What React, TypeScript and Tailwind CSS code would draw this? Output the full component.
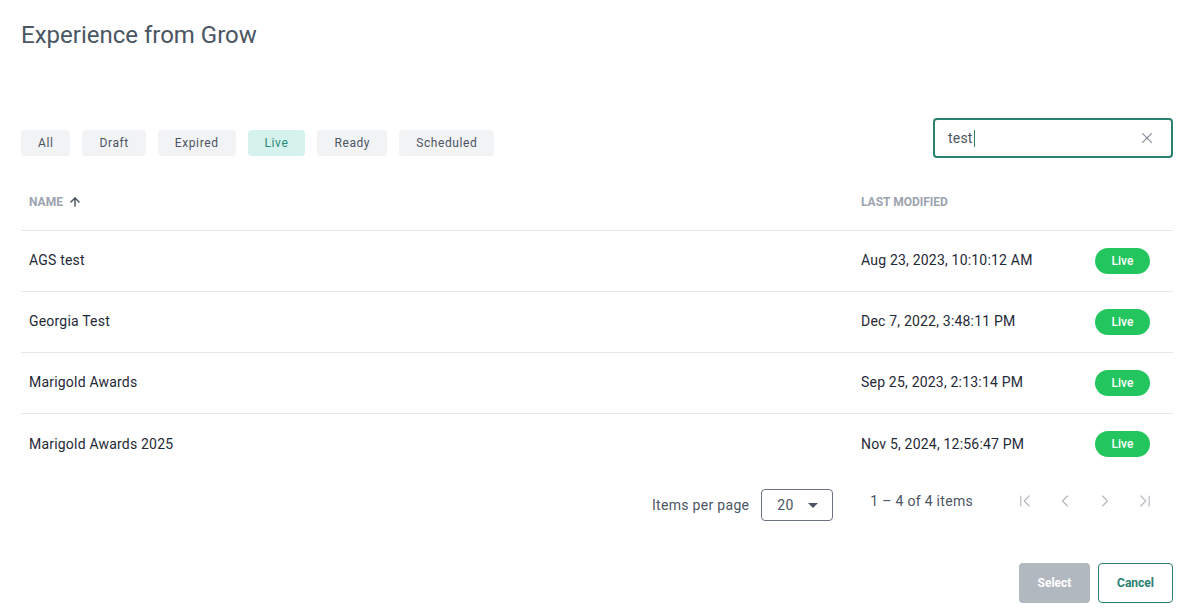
import { ArrowUp, X, ChevronLeft, ChevronRight, ChevronFirst, ChevronLast } from 'lucide-react'

type Fila = {
  nombre: string
  fecha: string
}

const FILTROS = ['All', 'Draft', 'Expired', 'Live', 'Ready', 'Scheduled']

const FILAS: Fila[] = [
  { nombre: 'AGS test', fecha: 'Aug 23, 2023, 10:10:12 AM' },
  { nombre: 'Georgia Test', fecha: 'Dec 7, 2022, 3:48:11 PM' },
  { nombre: 'Marigold Awards', fecha: 'Sep 25, 2023, 2:13:14 PM' },
  { nombre: 'Marigold Awards 2025', fecha: 'Nov 5, 2024, 12:56:47 PM' },
]

function App() {
  return (
    <div
      className="min-h-screen bg-white px-[21px] pt-[19px] text-[#1f2937]"
      style={{ fontFamily: 'Roboto, "Liberation Sans", sans-serif' }}
    >
      <h1 className="text-[24px] leading-8 text-[#4b5563]">Experience from Grow</h1>

      <div className="mt-[67px] flex items-start justify-between">
        <div className="mt-3 flex gap-3">
          {FILTROS.map((f) => (
            <button
              key={f}
              className={`h-[26px] rounded-[4px] px-[17px] text-[12px] tracking-[0.6px] ${
                f === 'Live' ? 'bg-[#d5f2ec] text-[#2a8a79]' : 'bg-[#f2f3f5] text-[#4b5563]'
              }`}
            >
              {f}
            </button>
          ))}
        </div>
        <div className="flex h-10 w-[240px] items-center rounded-[4px] border-2 border-[#2b8070] pl-[13px] pr-[15px]">
          <span className="text-[14px] tracking-[0.2px] text-[#4b5563]">test</span>
          <span className="ml-[1px] h-[17px] w-px bg-[#2b8070]" />
          <span className="flex-1" />
          <X size={18} strokeWidth={1.4} className="text-[#6b7280]" />
        </div>
      </div>

      <div className="mt-[15px]">
        <div className="flex h-[58px] items-center border-b border-[#e5e7eb] pt-[1px] text-[12px] font-bold uppercase text-[#9ca3af]">
          <div className="flex flex-1 items-center gap-[5px] pl-2">
            NAME
            <ArrowUp size={14} strokeWidth={2.5} className="text-[#4b5563]" />
          </div>
          <div className="w-[320px] pl-2">LAST MODIFIED</div>
        </div>
        {FILAS.map((fila, i) => (
          <div
            key={fila.nombre}
            className={`flex h-[61px] items-center pb-[1px] text-[14px] tracking-[0.2px] text-[#1f2937] ${
              i < FILAS.length - 1 ? 'border-b border-[#e5e7eb]' : ''
            }`}
          >
            <div className="flex-1 pl-2">{fila.nombre}</div>
            <div className="flex w-[320px] items-center pl-2">
              <span className="w-[234px]">{fila.fecha}</span>
              <span className="flex h-[26px] w-[55px] items-center justify-center rounded-full bg-[#22c55e] text-[12px] font-medium tracking-normal text-white">
                Live
              </span>
            </div>
          </div>
        ))}
      </div>

      <div className="mt-[14px] flex items-center justify-end pr-2 tracking-[0.3px]">
        <span className="text-[14px] text-[#4b5563]">Items per page</span>
        <div className="ml-3 flex h-8 w-[72px] items-center justify-between rounded-[4px] border border-[#6b7280] pl-[15px] pr-[14px]">
          <span className="text-[14px] text-[#4b5563]">20</span>
          <span className="h-0 w-0 border-x-[5px] border-t-[5px] border-x-transparent border-t-[#4b5563]" />
        </div>
        <span className="-mt-2 ml-[37px] text-[14px] text-[#4b5563]">1 – 4 of 4 items</span>
        <div className="-mt-2 ml-[32px] flex text-[#b8bcc2]">
          {[ChevronFirst, ChevronLeft, ChevronRight, ChevronLast].map((Icono, i) => (
            <span key={i} className="flex h-10 w-10 items-center justify-center">
              <Icono size={20} strokeWidth={1.5} />
            </span>
          ))}
        </div>
      </div>

      <div className="mt-[42px] flex justify-end gap-2">
        <button className="h-10 w-[71px] rounded-[4px] bg-[#b2b8c0] text-[12px] font-bold text-white">
          Select
        </button>
        <button className="h-10 w-[75px] rounded-[4px] border border-[#2b8070] text-[12px] font-bold text-[#2b8070]">
          Cancel
        </button>
      </div>
    </div>
  )
}

export default App
